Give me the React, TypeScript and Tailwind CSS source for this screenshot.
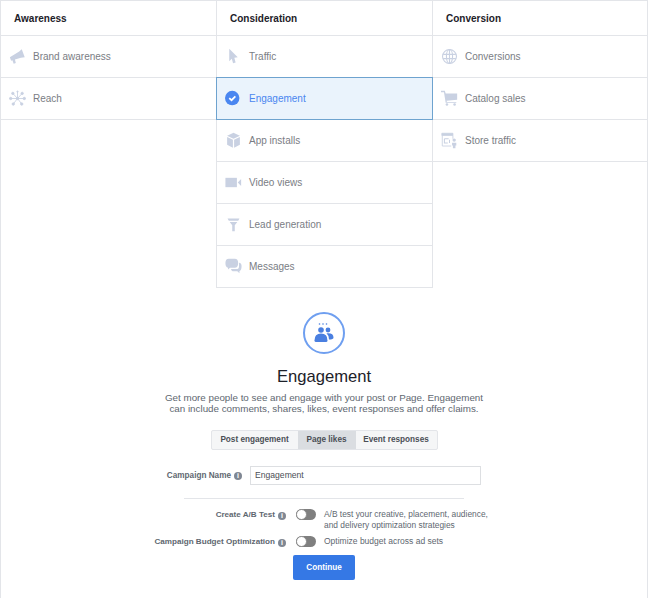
const columnClass = 'flex-none';

const iconClass = 'w-[17px] h-[17px] text-[#c9d1e2]';

const Megaphone = () => (
  <svg viewBox="0 0 20 20" className={iconClass} fill="currentColor">
    <path d="M1 11 L12 4 L15 1.5 L18.5 11 L14 11.5 L7 13.5 L8 17.5 L5.5 18.5 L4 14.5 L2.5 15 Z" />
  </svg>
);

const ReachIcon = () => (
  <svg viewBox="0 0 20 20" className={iconClass} fill="currentColor" stroke="currentColor">
    <path strokeWidth="1" fill="none" d="M10 10 L4.5 4 M10 10 L15.5 4 M10 10 L2 10 M10 10 L18 10 M10 10 L5 16.5 M10 10 L15 16.5 M10 10 L10 2" />
    <circle cx="10" cy="10" r="1.4" />
    <circle cx="4.5" cy="4" r="1.4" />
    <circle cx="15.5" cy="4" r="1.4" />
    <circle cx="2" cy="10" r="1.4" />
    <circle cx="18" cy="10" r="1.4" />
    <circle cx="5" cy="16.5" r="1.4" />
    <circle cx="15" cy="16.5" r="1.4" />
    <circle cx="10" cy="2" r="0.8" />
  </svg>
);

const Cursor = () => (
  <svg viewBox="0 0 20 20" className={iconClass} fill="currentColor">
    <path d="M5 1 L15 11 L11 11.5 L12.5 17 L9.5 18 L8 12.5 L5 15.5 Z" />
  </svg>
);

const CheckCircle = () => (
  <svg viewBox="0 0 20 20" className="w-[17px] h-[17px]">
    <circle cx="8.5" cy="9.5" r="8.5" fill="#4a86f0" />
    <path d="M5 9.5 L7.7 12 L12.2 7.5" fill="none" stroke="#ffffff" strokeWidth="2" />
  </svg>
);

const BoxIcon = () => (
  <svg viewBox="0 0 20 20" className={iconClass} fill="currentColor">
    <path d="M10 1 L17.5 4.5 L10 8 L2.5 4.5 Z" />
    <path d="M2.5 6 L9.3 9.2 L9.3 18.5 L2.5 15 Z" />
    <path d="M17.5 6 L10.7 9.2 L10.7 18.5 L17.5 15 Z" />
  </svg>
);

const VideoIcon = () => (
  <svg viewBox="0 0 20 20" className={iconClass} fill="currentColor">
    <rect x="0.5" y="4.5" width="13.5" height="11" />
    <path d="M15 10 L19 6 L19 14 Z" />
  </svg>
);

const Funnel = () => (
  <svg viewBox="0 0 20 20" className={iconClass} fill="currentColor">
    <path d="M3 3 H17 L15.5 5.5 H4.5 Z" />
    <path d="M5.5 7 H14.5 L11.5 11 V18 H8.5 V11 Z" />
  </svg>
);

const Bubbles = () => (
  <svg viewBox="0 0 20 20" className={iconClass} fill="currentColor">
    <path d="M4.5 1 H11.5 Q15.5 1 15.5 6 Q15.5 11.5 11.5 11.5 H6 L3.5 13.5 V11.5 Q0.5 11 0.5 6 Q0.5 1 4.5 1 Z" />
    <path d="M16.5 5.5 Q19.5 6 19.5 9.5 Q19.5 14.5 17 15.5 V18 L14.5 15.5 H9 Q7.5 15.5 7 13 H13.5 Q16.5 13 16.5 10 Z" />
  </svg>
);

const Globe = () => (
  <svg viewBox="0 0 20 20" className={iconClass} fill="none" stroke="currentColor" strokeWidth="1.3">
    <circle cx="10" cy="10" r="8.2" />
    <ellipse cx="10" cy="10" rx="3.6" ry="8.2" />
    <path d="M2.5 7.5 H17.5 M2.5 12.5 H17.5 M10 2 V18" />
  </svg>
);

const Cart = () => (
  <svg viewBox="0 0 20 20" className={iconClass} fill="currentColor">
    <path d="M0 1 H4.5 L5.5 4 H19 V11.5 L6.5 12.5 L7 14 H18 V15 H5.5 L3.5 2.5 H0 Z" />
    <circle cx="7" cy="17" r="1.5" />
    <circle cx="16" cy="17" r="1.5" />
  </svg>
);

const Store = () => (
  <svg viewBox="0 0 20 20" className={iconClass} fill="none" stroke="currentColor">
    <path d="M1 1.5 H14 V4 H1 Z" fill="currentColor" />
    <path d="M1.5 4 V16.5 H12 M14 4 V8" strokeWidth="1" />
    <path d="M4 8 H9 M4 8 V13 H8 M10 9 V13" strokeWidth="1.2" />
    <circle cx="15.5" cy="9.5" r="2" fill="currentColor" stroke="none" />
    <path d="M13 12.5 H18 V16 H17 V19 H14 V16 H13 Z" fill="currentColor" stroke="none" />
  </svg>
);

const PeopleIcon = () => (
  <div className="w-[42px] h-[42px] rounded-full border-2 border-[#6f9ff0] flex items-center justify-center">
    <svg viewBox="0 0 22 22" className="w-[22px] h-[22px]" fill="#4a7fe0">
      <circle cx="6.5" cy="2" r="0.8" />
      <circle cx="10" cy="2" r="0.8" />
      <circle cx="13.5" cy="2" r="0.8" />
      <circle cx="8" cy="8" r="2.8" />
      <circle cx="15" cy="8" r="2.4" />
      <path d="M1.5 18.5 Q1.5 11.5 8 11.5 Q14.5 11.5 14.5 18.5 Q14.5 20 13 20 H3 Q1.5 20 1.5 18.5 Z" />
      <path d="M13.5 11.3 Q20.5 10.5 20.5 15.5 Q20.5 17.5 16 17.5 Q16 13.5 13.5 11.3 Z" />
    </svg>
  </div>
);

const InfoDot = () => (
  <span className="w-[8px] h-[8px] rounded-full bg-[#7f8793] text-white flex items-center justify-center text-[7px] font-bold leading-none flex-none">
    i
  </span>
);

const Row = ({ icon, label, selected }: { icon: React.ReactNode; label: string; selected?: boolean }) => (
  <div
    className={
      selected
        ? 'relative -mx-px -mt-px h-[43px] flex items-center pl-[8px] bg-[#eaf3fc] border border-[#6ea3cf]'
        : 'h-[42px] flex items-center pl-[8px] border-b border-[#e3e5e9]'
    }
  >
    <span className="w-[24px] flex-none flex justify-start">{icon}</span>
    <span className={selected ? 'text-[#4a86f0]' : 'text-[#7a7d84]'}>{label}</span>
  </div>
);

const Header = ({ title }: { title: string }) => (
  <div className="h-[35px] flex items-center pl-[13px] border-b border-[#e3e5e9] font-bold text-[#1d2129]">
    {title}
  </div>
);

const Toggle = () => (
  <span className="w-[20px] h-[11px] rounded-full bg-[#7f7f7f] flex items-center flex-none">
    <span className="w-[11px] h-[11px] rounded-full bg-white border border-[#8a8a8a]" />
  </span>
);

export default function App() {
  return (
    <div
      className="w-[648px] h-[598px] bg-white text-[10px] overflow-hidden border-x border-t border-[#e3e5e9] box-border"
      style={{ fontFamily: '"Liberation Sans", Arial, sans-serif' }}
    >
      <div className="flex -mx-px">
        <div className={`${columnClass} w-[216px] pl-px`}>
          <Header title="Awareness" />
          <Row icon={<Megaphone />} label="Brand awareness" />
          <Row icon={<ReachIcon />} label="Reach" />
        </div>
        <div className={`${columnClass} w-[217px] border-x border-[#e3e5e9]`}>
          <Header title="Consideration" />
          <Row icon={<Cursor />} label="Traffic" />
          <Row icon={<CheckCircle />} label="Engagement" selected />
          <Row icon={<BoxIcon />} label="App installs" />
          <Row icon={<VideoIcon />} label="Video views" />
          <Row icon={<Funnel />} label="Lead generation" />
          <Row icon={<Bubbles />} label="Messages" />
        </div>
        <div className={`${columnClass} w-[215px] pr-px`}>
          <Header title="Conversion" />
          <Row icon={<Globe />} label="Conversions" />
          <Row icon={<Cart />} label="Catalog sales" />
          <Row icon={<Store />} label="Store traffic" />
        </div>
      </div>

      <div className="flex flex-col items-center mt-[24px]">
        <PeopleIcon />
        <div className="text-[16.6px] leading-[22px] text-[#1d2129] mt-[12px]">Engagement</div>
        <p className="text-[9.8px] text-[#606770] text-center leading-[11px] mt-[4px]">
          Get more people to see and engage with your post or Page. Engagement
          <br />
          can include comments, shares, likes, event responses and offer claims.
        </p>
        <div className="flex h-[20px] mt-[16px] rounded-[2px] border border-[#e3e5e9] bg-[#f5f6f7] text-[8.2px] font-bold text-[#4b4f56] items-stretch">
          <span className="w-[86px] pt-px flex items-center justify-center">Post engagement</span>
          <span className="w-[58px] pt-px flex items-center justify-center bg-[#dadde1]">Page likes</span>
          <span className="w-[81px] pt-px flex items-center justify-center">Event responses</span>
        </div>

        <div className="w-[648px] flex items-center mt-[15px] h-[20px]">
          <div className="w-[242px] pt-[2px] flex items-center justify-end gap-[3px] text-[8.2px] font-bold text-[#606770]">
            Campaign Name <InfoDot />
          </div>
          <div className="ml-[8px] w-[231px] h-[19px] border border-[#dddfe2] flex items-center px-[4px] text-[8.6px] text-[#4b4f56]">
            Engagement
          </div>
        </div>

        <div className="w-[280px] h-px bg-[#e3e5e9] mt-[13px]" />

        <div className="w-[648px] flex mt-[10px]">
          <div className="w-[286px] h-[13px] flex items-center justify-end gap-[3px] text-[8.1px] font-bold text-[#606770]">
            Create A/B Test <InfoDot />
          </div>
          <div className="ml-[10px]"><Toggle /></div>
          <div className="ml-[8px] text-[8.4px] leading-[11px] text-[#606770]">
            A/B test your creative, placement, audience,
            <br />
            and delivery optimization strategies
          </div>
        </div>

        <div className="w-[648px] flex mt-[5px]">
          <div className="w-[286px] h-[13px] flex items-center justify-end gap-[3px] text-[8.1px] font-bold text-[#606770]">
            Campaign Budget Optimization <InfoDot />
          </div>
          <div className="ml-[10px]"><Toggle /></div>
          <div className="ml-[8px] text-[8.5px] leading-[11px] text-[#606770]">Optimize budget across ad sets</div>
        </div>

        <button className="mt-[6px] w-[62px] h-[25px] pt-px rounded-[2px] bg-[#3578e5] text-white text-[8.2px] font-bold">
          Continue
        </button>
      </div>
    </div>
  );
}
